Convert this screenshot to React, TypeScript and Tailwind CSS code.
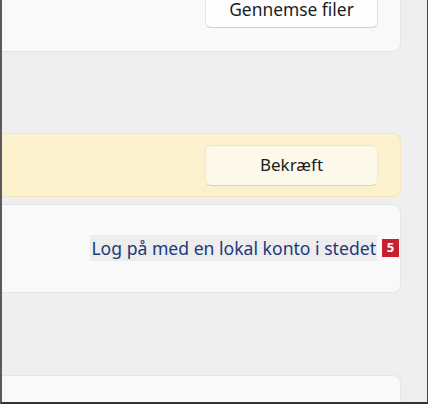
const font = { fontFamily: '"Noto Sans", "Open Sans", sans-serif' };

const App = () => {
    return (
        <div
            className="w-[428px] h-[404px] overflow-hidden bg-[#eeefee] border-l-2 border-l-[#5a5a5a] border-r border-r-[#444] border-b-2 border-b-[#333] flex flex-col pr-[26px]"
            style={font}
        >
            {/* FILES CARD */}
            <div className="h-[52px] shrink-0 flex justify-end items-end pb-[23px] pr-[22px] bg-[#f9f9f9] border-b border-r border-[#e4e4e4] rounded-br-lg">
                <button className="w-[173px] h-[41px] shrink-0 flex items-center justify-center pt-[3px] bg-[#fefefe] border border-[#e3e3e3] border-b-[#cfcfcf] rounded-md text-[17.4px] leading-[20px] text-[#1c1c1c]">
                    Gennemse filer
                </button>
            </div>

            {/* CONFIRM */}
            <div className="mt-[81px] h-[64px] shrink-0 flex justify-end items-center pr-[22px] bg-[#fcf1cd] border border-l-0 border-[#f3e6bd] rounded-r-lg">
                <button className="w-[173px] h-[41px] flex items-center justify-center bg-[#fdf9ea] border border-[#f1e8cb] border-b-[#ddd3b3] rounded-md text-[17px] text-[#1c1c1c]">
                    Bekræft
                </button>
            </div>

            {/* LOCAL ACCOUNT */}
            <div className="mt-[7px] h-[89px] shrink-0 flex justify-end items-center pr-[1px] bg-[#f9f9f9] border border-l-0 border-[#e4e4e4] rounded-r-lg">
                <div className="flex items-center gap-[5px] -mt-[1px]">
                    <span className="h-[26px] flex items-center px-[1px] bg-[#ededed] text-[17.6px] text-[#21387a]">
                        Log på med en lokal konto i stedet
                    </span>
                    <span className="w-[17px] h-[18px] flex items-center justify-center bg-[#c8202f] text-white text-[13px] font-bold">
                        5
                    </span>
                </div>
            </div>

            {/* NEXT CARD */}
            <div className="mt-[82px] h-[40px] shrink-0 bg-[#f9f9f9] border border-l-0 border-[#e4e4e4] rounded-tr-lg" />
        </div>
    );
};

export default App;
